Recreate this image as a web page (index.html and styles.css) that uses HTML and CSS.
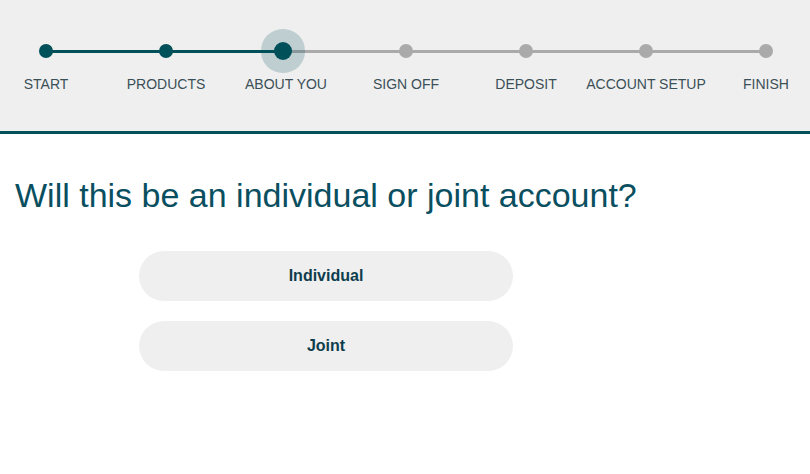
FILE: index.html
```html
<!DOCTYPE html>
<html lang="en">
<head>
<meta charset="utf-8">
<title>About you</title>
<link rel="stylesheet" href="styles.css">
</head>
<body>
<header class="progress">
  <ol class="steps">
    <li class="step done"><span class="node"><span class="dot"></span></span><span class="label">START</span></li>
    <li class="step done"><span class="node"><span class="dot"></span></span><span class="label">PRODUCTS</span></li>
    <li class="step current"><span class="node"><span class="dot"></span></span><span class="label">ABOUT YOU</span></li>
    <li class="step"><span class="node"><span class="dot"></span></span><span class="label">SIGN OFF</span></li>
    <li class="step"><span class="node"><span class="dot"></span></span><span class="label">DEPOSIT</span></li>
    <li class="step"><span class="node"><span class="dot"></span></span><span class="label">ACCOUNT SETUP</span></li>
    <li class="step"><span class="node"><span class="dot"></span></span><span class="label">FINISH</span></li>
  </ol>
</header>
<main class="content">
  <h1 class="question">Will this be an individual or joint account?</h1>
  <div class="choices">
    <button class="choice" type="button">Individual</button>
    <button class="choice" type="button">Joint</button>
  </div>
</main>
</body>
</html>
```
FILE: styles.css
```css
html, body {
  margin: 0;
  padding: 0;
  background: #ffffff;
  font-family: "Liberation Sans", Arial, sans-serif;
}

.progress {
  background: #efefef;
  height: 131px;
  border-bottom: 3px solid #00505a;
  overflow: hidden;
}

.steps {
  list-style: none;
  margin: 0 0 0 -14px;
  padding: 41px 0 0 0;
  display: grid;
  grid-template-columns: repeat(7, 120px);
}

.step {
  display: flex;
  flex-direction: column;
  align-items: center;
}

.node {
  position: relative;
  height: 20px;
  width: 100%;
  display: flex;
  align-items: center;
  justify-content: center;
}

.step + .step .node::before {
  content: "";
  position: absolute;
  right: 50%;
  top: 50%;
  width: 120px;
  height: 3px;
  margin-top: -1.5px;
  background: #aaaaaa;
  z-index: 0;
}

.step.done + .step .node::before {
  background: #00505a;
}

.dot {
  position: relative;
  z-index: 1;
  width: 14px;
  height: 14px;
  border-radius: 50%;
  background: #aaaaaa;
}

.done .dot {
  background: #00505a;
}

.current .dot {
  width: 18px;
  height: 18px;
  margin-right: 6px;
  background: #00505a;
  box-shadow: 0 0 0 13px rgba(0, 80, 90, 0.2);
}

.label {
  margin-top: 15px;
  font-size: 14px;
  line-height: 16px;
  color: #3b4f57;
  white-space: nowrap;
}

.content {
  padding: 41px 0 0 15px;
}

.question {
  margin: 0;
  font-size: 34px;
  line-height: 40px;
  font-weight: normal;
  color: #0a4f5f;
}

.choices {
  margin: 36px 0 0 124px;
  width: 374px;
  display: flex;
  flex-direction: column;
  gap: 20px;
}

.choice {
  height: 50px;
  border: none;
  border-radius: 25px;
  background: #efefef;
  font-family: "Liberation Sans", Arial, sans-serif;
  font-weight: bold;
  font-size: 16px;
  color: #0e3d4d;
  padding: 0;
  cursor: pointer;
}
```
